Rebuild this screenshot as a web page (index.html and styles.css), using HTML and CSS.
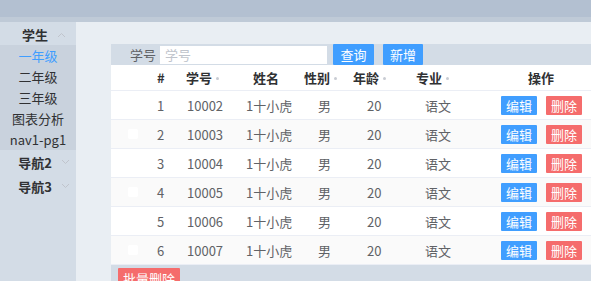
FILE: index.html
```html
<!DOCTYPE html>
<html lang="zh">
<head>
<meta charset="utf-8">
<link rel="stylesheet" href="styles.css">
</head>
<body>
<div class="header"></div>
<div class="container">
  <aside class="aside">
    <div class="menu-title first"><span>学生</span><svg class="chev" width="9" height="6" viewBox="0 0 9 6"><polyline points="1,5 4.5,1.5 8,5" fill="none" stroke="#c0c4cc" stroke-width="1"/></svg></div>
    <div class="submenu">
      <div class="menu-item active">一年级</div>
      <div class="menu-item">二年级</div>
      <div class="menu-item">三年级</div>
      <div class="menu-item">图表分析</div>
      <div class="menu-item">nav1-pg1</div>
    </div>
    <div class="menu-title"><span>导航2</span><svg class="chev" width="9" height="6" viewBox="0 0 9 6"><polyline points="1,1 4.5,4.5 8,1" fill="none" stroke="#c0c4cc" stroke-width="1"/></svg></div>
    <div class="menu-title"><span>导航3</span><svg class="chev" width="9" height="6" viewBox="0 0 9 6"><polyline points="1,1 4.5,4.5 8,1" fill="none" stroke="#c0c4cc" stroke-width="1"/></svg></div>
  </aside>
  <main class="main">
    <div class="panel">
      <div class="toolbar">
        <span class="label">学号</span>
        <div class="input">学号</div>
        <button class="btn btn-primary">查询</button>
        <button class="btn btn-primary btn-add">新增</button>
      </div>
      <div class="table">
        <div class="row thead">
          <div class="cell"></div>
          <div class="cell">#</div>
          <div class="cell">学号<span class="caret"></span></div>
          <div class="cell">姓名</div>
          <div class="cell">性别<span class="caret"></span></div>
          <div class="cell">年龄<span class="caret"></span></div>
          <div class="cell">专业<span class="caret"></span></div>
          <div class="cell">操作</div>
        </div>
        <div class="row tbody">
          <div class="cell"><span class="check"></span></div>
          <div class="cell">1</div><div class="cell">10002</div><div class="cell">1十小虎</div><div class="cell">男</div><div class="cell">20</div><div class="cell">语文</div>
          <div class="cell ops"><button class="sbtn edit">编辑</button><button class="sbtn del">删除</button></div>
        </div>
        <div class="row tbody stripe">
          <div class="cell"><span class="check"></span></div>
          <div class="cell">2</div><div class="cell">10003</div><div class="cell">1十小虎</div><div class="cell">男</div><div class="cell">20</div><div class="cell">语文</div>
          <div class="cell ops"><button class="sbtn edit">编辑</button><button class="sbtn del">删除</button></div>
        </div>
        <div class="row tbody">
          <div class="cell"><span class="check"></span></div>
          <div class="cell">3</div><div class="cell">10004</div><div class="cell">1十小虎</div><div class="cell">男</div><div class="cell">20</div><div class="cell">语文</div>
          <div class="cell ops"><button class="sbtn edit">编辑</button><button class="sbtn del">删除</button></div>
        </div>
        <div class="row tbody stripe">
          <div class="cell"><span class="check"></span></div>
          <div class="cell">4</div><div class="cell">10005</div><div class="cell">1十小虎</div><div class="cell">男</div><div class="cell">20</div><div class="cell">语文</div>
          <div class="cell ops"><button class="sbtn edit">编辑</button><button class="sbtn del">删除</button></div>
        </div>
        <div class="row tbody">
          <div class="cell"><span class="check"></span></div>
          <div class="cell">5</div><div class="cell">10006</div><div class="cell">1十小虎</div><div class="cell">男</div><div class="cell">20</div><div class="cell">语文</div>
          <div class="cell ops"><button class="sbtn edit">编辑</button><button class="sbtn del">删除</button></div>
        </div>
        <div class="row tbody stripe">
          <div class="cell"><span class="check"></span></div>
          <div class="cell">6</div><div class="cell">10007</div><div class="cell">1十小虎</div><div class="cell">男</div><div class="cell">20</div><div class="cell">语文</div>
          <div class="cell ops"><button class="sbtn edit">编辑</button><button class="sbtn del">删除</button></div>
        </div>
      </div>
      <div class="footer">
        <button class="btn btn-danger">批量删除</button>
      </div>
    </div>
  </main>
</div>
</body>
</html>
```
FILE: styles.css
```css
* { box-sizing: border-box; }
html, body {
  margin: 0;
  padding: 0;
  width: 591px;
  height: 281px;
  overflow: hidden;
  font-family: "Noto Sans CJK SC", "Noto Sans", sans-serif;
  font-size: 13px;
  color: #303133;
}
.header {
  height: 22px;
  background: #b3c0d1;
  border-bottom: 5px solid #bfcad7;
}
.container {
  display: flex;
  height: 259px;
}
.aside {
  width: 76px;
  flex: none;
  background: #d3dce6;
}
.menu-title {
  height: 24px;
  display: flex;
  align-items: center;
  justify-content: center;
  gap: 9px;
  padding-left: 12px;
  font-weight: bold;
  color: #303133;
}
.menu-title.first { height: 23px; padding-top: 2px; }
.chev { display: block; }
.submenu { background: #c9d2dd; }
.menu-item {
  height: 21px;
  line-height: 21px;
  text-align: center;
  color: #303133;
}
.menu-item.active { color: #409eff; }
.main {
  flex: 1;
  background: #e9eef3;
  padding: 22px 0 0 35px;
  overflow: hidden;
}
.panel {
  width: 480px;
  display: flex;
  flex-direction: column;
  height: 100%;
}
.toolbar {
  height: 21px;
  background: #d3dce6;
  display: flex;
  align-items: center;
  flex: none;
}
.label {
  width: 49px;
  padding-left: 19px;
  color: #606266;
}
.input {
  width: 167px;
  height: 18px;
  background: #fff;
  color: #c0c4cc;
  padding-left: 5px;
  line-height: 18px;
}
.btn {
  border: none;
  margin: 0;
  padding: 0;
  font-family: inherit;
  font-size: 13px;
  color: #fff;
  height: 21px;
  line-height: 21px;
  border-radius: 1px;
}
.btn-primary { background: #409eff; width: 41px; margin-left: 6px; }
.btn-add { width: 40px; margin-left: 9px; }
.btn-danger { background: #f56c6c; width: 62px; height: 20px; margin: 3px 0 0 7px; }
.table {
  background: #fff;
  flex: none;
}
.row {
  display: grid;
  grid-template-columns: 34px 35px 60px 58px 47px 60px 75px 111px;
  border-bottom: 1px solid #ebeef5;
}
.thead {
  height: 26px;
  font-weight: bold;
  color: #303133;
}
.tbody {
  height: 29px;
  color: #606266;
}
.stripe { background: #fafafa; }
.cell {
  display: flex;
  align-items: center;
  white-space: nowrap;
}
.thead .cell:nth-child(2) { padding-left: 12px; }
.thead .cell:nth-child(3) { padding-left: 6px; }
.thead .cell:nth-child(4) { padding-left: 13px; }
.thead .cell:nth-child(5) { padding-left: 6px; }
.thead .cell:nth-child(6) { padding-left: 8px; }
.thead .cell:nth-child(7) { padding-left: 11px; }
.thead .cell:nth-child(8) { padding-left: 48px; }
.tbody .cell:nth-child(1) { padding-left: 17px; }
.tbody .cell:nth-child(2) { padding-left: 12px; }
.tbody .cell:nth-child(3) { padding-left: 7px; }
.tbody .cell:nth-child(4) { padding-left: 6px; }
.tbody .cell:nth-child(5) { padding-left: 20px; }
.tbody .cell:nth-child(6) { padding-left: 22px; }
.tbody .cell:nth-child(7) { padding-left: 20px; }
.tbody .cell:nth-child(8) { padding-left: 21px; }
.caret {
  display: inline-block;
  width: 3px;
  height: 3px;
  margin-left: 4px;
  margin-top: 2px;
  border-radius: 50%;
  background: #c8ccd3;
}
.check {
  display: inline-block;
  width: 10px;
  height: 10px;
  background: #fff;
  border-radius: 2px;
}
.ops { gap: 9px; }
.sbtn {
  border: none;
  margin: 0;
  padding: 0;
  width: 36px;
  height: 19px;
  font-family: inherit;
  font-size: 13px;
  line-height: 19px;
  color: #fff;
  border-radius: 1px;
}
.edit { background: #409eff; }
.del { background: #f56c6c; }
.footer {
  flex: 1;
  background: #d3dce6;
}
```
